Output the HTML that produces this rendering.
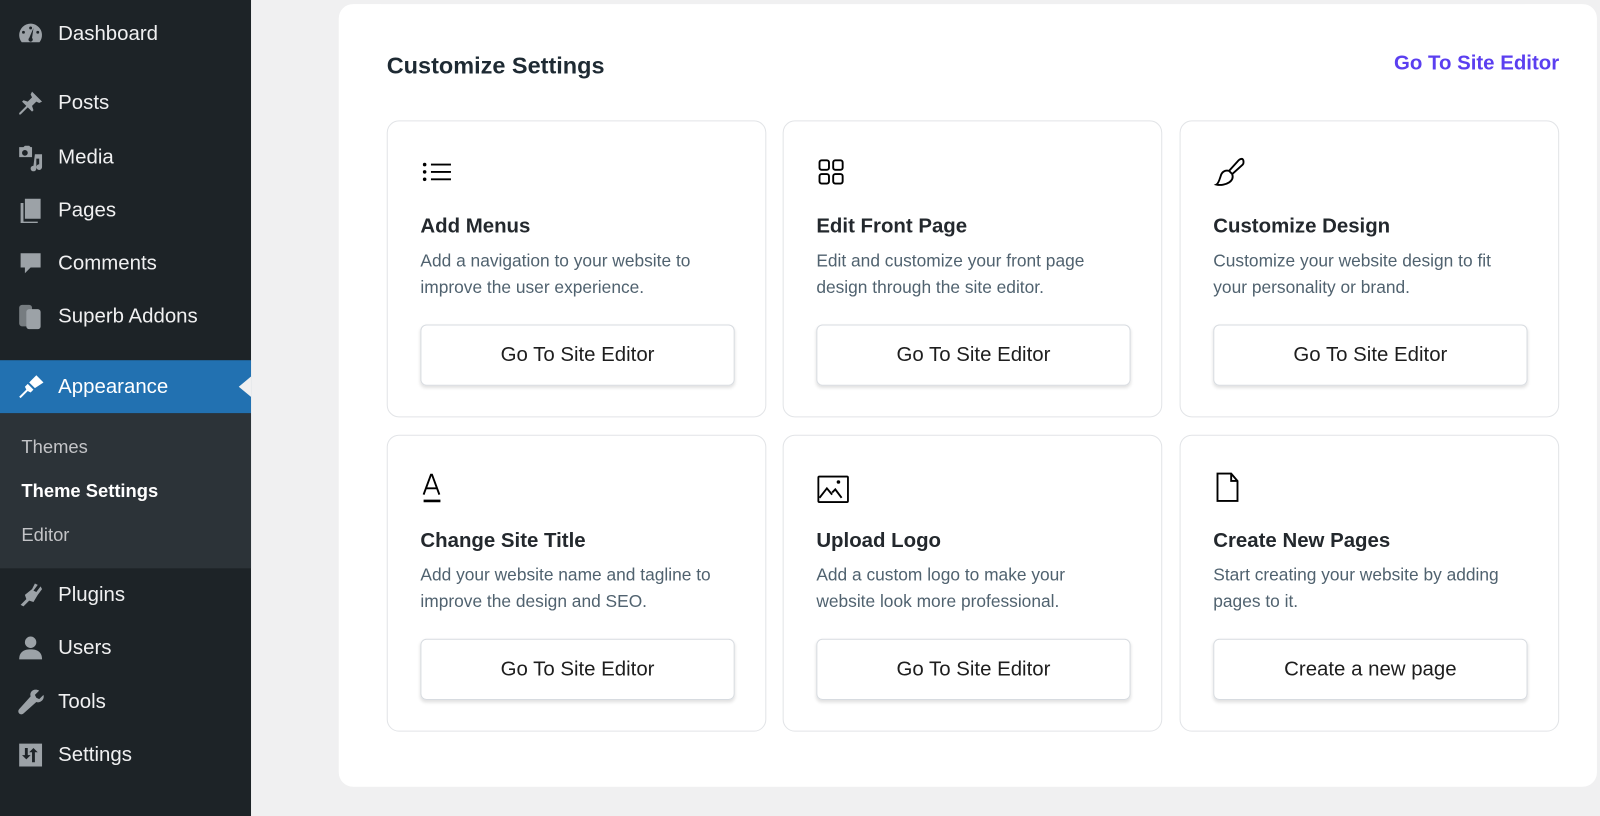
<!DOCTYPE html>
<html><head><style>
*{box-sizing:border-box;margin:0;padding:0}
body{width:1600px;height:791px;overflow:hidden;background:#f0f0f1;font-family:"Liberation Sans",sans-serif;position:relative}
#w{position:absolute;left:0;top:0;width:1568px;height:776px;transform:scale(1.0204);transform-origin:0 0}
#sb{position:absolute;left:0;top:0;width:246px;height:800px;background:#1d2327}
.mi{position:absolute;left:0;width:246px;height:40px;display:flex;align-items:center;color:#f0f0f1;font-size:20px}
.mi svg{position:absolute;left:16px;width:28px;height:28px;fill:#9ca2a7}
.mi span{position:absolute;left:57px}
#app{top:353px;height:52px;background:#2271b1;color:#fff}
#app svg{fill:#fff}
#arrow{position:absolute;right:0;top:369px;width:0;height:0;border-top:10px solid transparent;border-bottom:10px solid transparent;border-right:12px solid #f0f0f1}
#sub{position:absolute;left:0;top:405px;width:246px;height:152px;background:#2c3338}
.si{position:absolute;left:21px;font-size:18px;color:#c3c4c7}
#panel{position:absolute;left:332px;top:4px;width:1233px;height:767px;background:#fff;border-radius:14px}
h1{position:absolute;left:379px;top:51px;font-size:23px;color:#1e2a33;font-weight:bold}
#link{position:absolute;right:40px;top:51px;font-size:20px;color:#5b3ff0;font-weight:bold}
.card{position:absolute;width:372px;height:291px;border:1.5px solid #e2e4e7;border-radius:12px;background:#fff}
.card svg{position:absolute;left:31px;top:33px;width:33px;height:33px;fill:none;stroke:#000;stroke-width:1.8}
.card h3{position:absolute;left:32px;top:92px;font-size:20px;color:#23282d;font-weight:bold}
.card p{position:absolute;left:32px;top:124px;width:300px;font-size:17px;line-height:26px;color:#50626f}
.card .b{position:absolute;left:32px;top:199px;width:308px;height:60px;border:1.5px solid #d7dbe0;border-radius:6px;box-shadow:0 2px 3px rgba(0,0,0,.12);display:flex;align-items:center;justify-content:center;font-size:20px;color:#1e1e1e}
</style></head><body><div id="w">
<div id="sb">
<div class="mi" style="top:13px"><svg viewBox="0 0 20 20"><path d="M10 3a8 8 0 0 0-8 8c0 2 .7 3.6 1.8 5h12.4A8 8 0 0 0 10 3zm0 2a1 1 0 1 1 0 2 1 1 0 0 1 0-2zM5 8a1 1 0 1 1 0 2 1 1 0 0 1 0-2zm10 0a1 1 0 1 1 0 2 1 1 0 0 1 0-2zm-3-2l-1 7a1.5 1.5 0 1 1-2 0z"/></svg><span>Dashboard</span></div>
<div class="mi" style="top:81px"><svg viewBox="0 0 20 20"><path d="M11 2l7 7-2 1-2-1-3 3 1 3-1 1-3-3-5 5-1 0 0-1 5-5-3-3 1-1 3 1 3-3-1-2z"/></svg><span>Posts</span></div>
<div class="mi" style="top:134px"><svg viewBox="0 0 20 20"><path d="M2 3h3l1-1h3l1 1h1v7H2zm4 2a2 2 0 1 0 0 4 2 2 0 0 0 0-4zM13 8h5v9a2 2 0 1 1-2-2V11h-2v7a2 2 0 1 1-2-2z"/></svg><span>Media</span></div>
<div class="mi" style="top:186px"><svg viewBox="0 0 20 20"><path d="M6 2h11v14H6zM3 5h2v13h10v1H3z"/></svg><span>Pages</span></div>
<div class="mi" style="top:238px"><svg viewBox="0 0 20 20"><path d="M3 3h14v10h-7l-4 4v-4H3z"/></svg><span>Comments</span></div>
<div class="mi" style="top:290px"><svg viewBox="0 0 20 20"><rect x="2" y="2" width="9" height="15" rx="2" opacity=".7"/><rect x="7" y="5" width="10" height="14" rx="2"/></svg><span>Superb Addons</span></div>
<div class="mi" id="app"><svg viewBox="0 0 20 20"><path d="M14 2l5 5-6 4-4-4zM8 8l4 4-2 2-2-1-5 5-1-1 5-5-1-2z"/></svg><span>Appearance</span></div>
<div id="arrow"></div>
<div id="sub">
<div class="si" style="top:23px">Themes</div>
<div class="si" style="top:66px;color:#fff;font-weight:bold">Theme Settings</div>
<div class="si" style="top:109px">Editor</div>
</div>
<div class="mi" style="top:563px"><svg viewBox="0 0 20 20"><path d="M13 2l2 1-3 4 2 1 3-4 1 2-3 4-3 5-3-1-4 4-2-1 4-4-1-3 5-4z"/></svg><span>Plugins</span></div>
<div class="mi" style="top:615px"><svg viewBox="0 0 20 20"><circle cx="10" cy="6" r="4"/><path d="M2 18c0-5 3-7 8-7s8 2 8 7z"/></svg><span>Users</span></div>
<div class="mi" style="top:668px"><svg viewBox="0 0 20 20"><path d="M16 2l-3 3 1 2 2 1 3-3c1 3-2 6-5 5L5 18a2 2 0 0 1-3-3l8-9c-1-3 2-6 6-4z"/></svg><span>Tools</span></div>
<div class="mi" style="top:720px"><svg viewBox="0 0 20 20"><path d="M2 2h16v16H2zm4 3v5H4l3 3 3-3H8V5zm6 0l-3 3h2v7h2V8h2z"/></svg><span>Settings</span></div>
</div>
<div id="panel"></div>
<h1>Customize Settings</h1>
<div id="link">Go To Site Editor</div>

<div class="card" style="left:379px;top:118px"><svg viewBox="0 0 32 32"><path d="M11 9h19M11 16h19M11 23h19"/><circle cx="5" cy="9" r=".8" fill="#000"/><circle cx="5" cy="16" r=".8" fill="#000"/><circle cx="5" cy="23" r=".8" fill="#000"/></svg><h3>Add Menus</h3><p>Add a navigation to your website to improve the user experience.</p><div class="b">Go To Site Editor</div></div>
<div class="card" style="left:767px;top:118px"><svg viewBox="0 0 32 32"><rect x="4" y="5" width="9" height="9" rx="2"/><rect x="17" y="5" width="9" height="9" rx="2"/><rect x="4" y="18" width="9" height="9" rx="2"/><rect x="17" y="18" width="9" height="9" rx="2"/></svg><h3>Edit Front Page</h3><p>Edit and customize your front page design through the site editor.</p><div class="b">Go To Site Editor</div></div>
<div class="card" style="left:1156px;top:118px"><svg viewBox="0 0 32 32"><path d="M29 4c-1-1-3 0-4 1l-9 10 3 3 10-9c1-1 1-4 0-5zM16 15c-4-1-7 1-8 5-1 3-2 7-4 8 4 1 9 0 12-2s4-5 3-8"/></svg><h3>Customize Design</h3><p>Customize your website design to fit your personality or brand.</p><div class="b">Go To Site Editor</div></div>
<div class="card" style="left:379px;top:426px"><svg viewBox="0 0 32 32"><path d="M4 24L11 5h1l7 19M6.5 18h10"/><path d="M4 30h16" stroke-width="2.5"/></svg><h3>Change Site Title</h3><p>Add your website name and tagline to improve the design and SEO.</p><div class="b">Go To Site Editor</div></div>
<div class="card" style="left:767px;top:426px"><svg viewBox="0 0 32 32"><rect x="3" y="7" width="29" height="25" rx="1" transform="scale(.97)"/><path d="M4 27l7-9 5 6M16 22l3-3 6 8"/><circle cx="22" cy="12" r=".8" fill="#000"/></svg><h3>Upload Logo</h3><p>Add a custom logo to make your website look more professional.</p><div class="b">Go To Site Editor</div></div>
<div class="card" style="left:1156px;top:426px"><svg viewBox="0 0 32 32"><path d="M5 4h13l6 7v19H5zM18 4v7h6"/></svg><h3>Create New Pages</h3><p>Start creating your website by adding pages to it.</p><div class="b">Create a new page</div></div>
</div></body></html>
